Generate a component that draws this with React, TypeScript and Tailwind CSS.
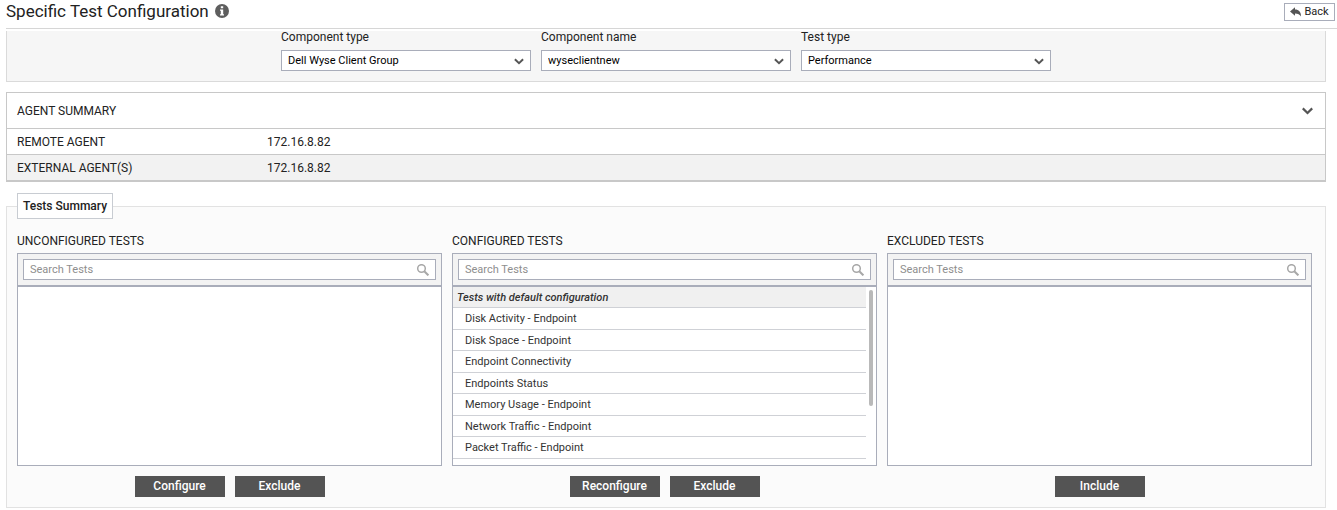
import { useState, type ReactNode } from "react";

const FILTERS = [
  { id: "component-type", label: "Component type", value: "Dell Wyse Client Group" },
  { id: "component-name", label: "Component name", value: "wyseclientnew" },
  { id: "test-type", label: "Test type", value: "Performance" },
];

const AGENTS = [
  { name: "REMOTE AGENT", address: "172.16.8.82" },
  { name: "EXTERNAL AGENT(S)", address: "172.16.8.82" },
];

const DEFAULT_TESTS = [
  "Disk Activity - Endpoint",
  "Disk Space - Endpoint",
  "Endpoint Connectivity",
  "Endpoints Status",
  "Memory Usage - Endpoint",
  "Network Traffic - Endpoint",
  "Packet Traffic - Endpoint",
  "System Details - Endpoint",
];

function InfoIcon() {
  return (
    <svg viewBox="0 0 14 14" className="size-3.5" aria-hidden="true">
      <circle cx="7" cy="7" r="7" fill="#5e5e5e" />
      <path d="M5.8 2.2h2.4v2H5.8zM5 5.4h3.2v4.8H9v1.3H5v-1.3h.8V6.7H5z" fill="#fff" />
    </svg>
  );
}

function BackIcon() {
  return (
    <svg viewBox="0 0 11 10" className="h-2.5 w-[11px]" aria-hidden="true">
      <path d="M0 4.5 5 .3v2.3c3.8 0 6 2.2 6 6.9C9.8 7.2 8 6.4 5 6.4v2.3z" fill="#555" />
    </svg>
  );
}

function Chevron({ className }: { className?: string }) {
  return (
    <svg viewBox="0 0 11 8" className={className} fill="none" stroke="#555" strokeWidth="2.2" aria-hidden="true">
      <path d="M.8 1.4 5.5 6 10.2 1.4" />
    </svg>
  );
}

function SearchIcon() {
  return (
    <svg viewBox="0 0 12 12" className="size-3 flex-none" fill="none" stroke="#a8a8a8" aria-hidden="true">
      <circle cx="4.5" cy="4.5" r="3.8" strokeWidth="1.5" />
      <path d="m7.3 7.3 4.1 4.1" strokeWidth="2" />
    </svg>
  );
}

function FilterSelect({ id, label, value }: { id: string; label: string; value: string }) {
  return (
    <div className="w-[250px]">
      <label htmlFor={id} className="block text-xs leading-3">
        {label}
      </label>
      <div className="mt-[7px] grid items-center">
        <select
          id={id}
          defaultValue={value}
          className="col-start-1 row-start-1 h-[21px] w-full appearance-none border border-[#a9adba] bg-white px-1.5 text-[11px] leading-4 text-black"
        >
          <option>{value}</option>
        </select>
        <Chevron className="pointer-events-none col-start-1 row-start-1 mt-0.5 mr-[7px] h-[7px] w-2.5 justify-self-end" />
      </div>
    </div>
  );
}

function ActionButton({ children }: { children: ReactNode }) {
  return (
    <button type="button" className="h-[21px] w-[90px] bg-[#545454] pb-0.5 text-xs leading-4 font-medium text-white">
      {children}
    </button>
  );
}

function TestPanel({ title, actions, children }: { title: string; actions: string[]; children?: ReactNode }) {
  return (
    <section className="min-w-0 flex-1">
      <h2 className="text-xs leading-4">{title}</h2>
      <div className="mt-1 border border-[#a9adba]">
        <div className="border-b-2 border-[#a9adba] bg-[#f3f3f3] p-[5px]">
          <div className="flex h-[21px] items-center border border-[#a9adba] bg-white px-1.5">
            <input
              type="text"
              aria-label={`Search ${title.toLowerCase()}`}
              placeholder="Search Tests"
              className="h-[19px] min-w-0 flex-1 text-[11px] outline-none placeholder:text-[#8e8e8e]"
            />
            <SearchIcon />
          </div>
        </div>
        <div className="flex h-[178px] overflow-hidden bg-white">{children}</div>
      </div>
      <div className="mt-2.5 flex justify-center gap-2.5">
        {actions.map((action) => (
          <ActionButton key={action}>{action}</ActionButton>
        ))}
      </div>
    </section>
  );
}

export default function App() {
  const [agentsOpen, setAgentsOpen] = useState(true);

  return (
    <div className="bg-white font-['Roboto','Liberation_Sans',sans-serif] text-[#222]">
      <header className="ml-1.5 flex h-[29px] items-center justify-between border-b border-[#d6d6d6] pr-0.5 pb-1">
        <div className="flex items-center gap-1.5 pb-0.5">
          <h1 className="text-[17px] leading-5">Specific Test Configuration</h1>
          <InfoIcon />
        </div>
        <button
          type="button"
          className="flex h-[18px] w-[51px] items-center justify-center gap-[3px] border border-[#a9adba] bg-white text-[11px] leading-[18px]"
        >
          <BackIcon />
          Back
        </button>
      </header>

      <main className="mt-0.5 mr-[11px] ml-1.5">
        <div className="flex justify-center gap-2.5 border border-t-0 border-[#dadada] bg-[#f6f6f6] pb-2.5">
          {FILTERS.map((filter) => (
            <FilterSelect key={filter.id} {...filter} />
          ))}
        </div>

        <section className="mt-2.5 border border-b-2 border-[#c8c8c8] text-xs">
          <button
            type="button"
            aria-expanded={agentsOpen}
            onClick={() => setAgentsOpen(!agentsOpen)}
            className="flex h-[35px] w-full items-center justify-between pr-3 pl-2.5"
          >
            AGENT SUMMARY
            <Chevron className="h-2 w-[11px]" />
          </button>
          {agentsOpen && (
            <table className="w-full border-separate border-spacing-0">
              <tbody>
                {AGENTS.map((agent) => (
                  <tr key={agent.name} className="even:bg-[#f2f2f2]">
                    <th
                      scope="row"
                      className="h-[26px] w-[250px] border-t border-[#c8c8c8] p-0 pl-2.5 text-left font-normal"
                    >
                      {agent.name}
                    </th>
                    <td className="h-[26px] border-t border-[#c8c8c8] p-0 pl-2.5">{agent.address}</td>
                  </tr>
                ))}
              </tbody>
            </table>
          )}
        </section>

        <fieldset className="mt-[11px] border border-[#e2e2e2] bg-[#fbfbfb] pr-[13px] pb-2.5 pl-2.5">
          <legend className="h-[26px] border border-[#c8ccd2] bg-white px-[5px] text-xs leading-6 font-medium">
            Tests Summary
          </legend>
          <div className="mt-3.5 flex gap-2.5">
            <TestPanel title="UNCONFIGURED TESTS" actions={["Configure", "Exclude"]} />
            <TestPanel title="CONFIGURED TESTS" actions={["Reconfigure", "Exclude"]}>
              <div className="min-w-0 flex-1 text-[11px] text-[#333]">
                <h3 className="h-[21px] border-b border-[#cfd1d6] bg-[#f0f0f0] pl-1 leading-[22px] font-medium italic">
                  Tests with default configuration
                </h3>
                <ul>
                  {DEFAULT_TESTS.map((test) => (
                    <li key={test} className="h-[22px] border-b border-[#cfd1d6] pl-3 leading-[22px] even:h-[21px]">
                      {test}
                    </li>
                  ))}
                </ul>
              </div>
              <div className="w-2.5 flex-none px-[3px] pt-[3px]">
                <div className="h-[116px] rounded-full bg-[#b9b9b9]" />
              </div>
            </TestPanel>
            <TestPanel title="EXCLUDED TESTS" actions={["Include"]} />
          </div>
        </fieldset>
      </main>
    </div>
  );
}
